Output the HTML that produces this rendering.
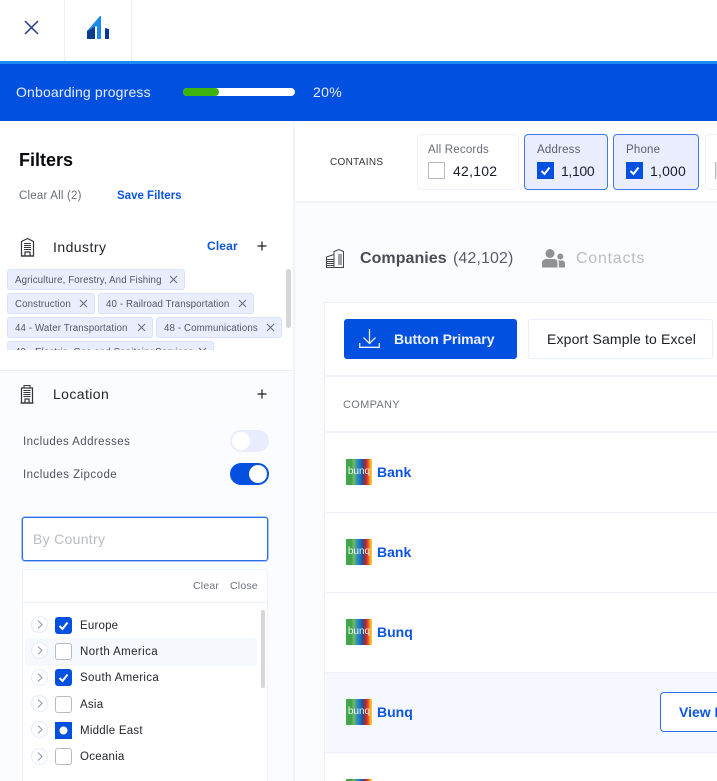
<!DOCTYPE html>
<html lang="en">
<head>
<meta charset="utf-8">
<title>Onboarding</title>
<style>
*{box-sizing:border-box}
html,body{margin:0;padding:0}
body{width:717px;height:781px;overflow:hidden;background:#fff;position:relative;font-family:"Liberation Sans",sans-serif;color:#1b1d24}
.a{position:absolute}
.t{position:absolute;white-space:nowrap;line-height:1}
.chip{position:absolute;height:21px;background:#e9edfd;border:1px solid #d9e2fc;border-radius:3px;font-size:9.7px;color:#525667;line-height:19px;padding-top:1px;padding-left:7px;white-space:nowrap;letter-spacing:.12px}
.chip svg{position:absolute;top:5px;right:6px}
.cb{position:absolute;width:17px;height:17px;border-radius:3px;background:#fff;border:1px solid #b9bbc1}
.cb.on{background:#0250e0;border-color:#0250e0}
.cb svg{position:absolute;left:2px;top:2px}
.exp{position:absolute;left:31px;width:17px;height:17px;border-radius:50%;background:#fff;border:1px solid #e8ebfb}
.exp svg{position:absolute;left:3px;top:3px}
.stat{position:absolute;top:134px;height:56px;border-radius:4px}
.row{position:absolute;left:325px;width:392px;height:80px;border-bottom:1px solid #eef1fd;background:#fff;overflow:hidden}
.logo{position:absolute;left:21px;top:26px;width:26px;height:26px;background:linear-gradient(90deg,#46a84a 0,#3f9f4c 20%,#74bb58 30%,#2f8fc4 42%,#1f6fb5 55%,#25508f 65%,#b5282e 75%,#e2462a 84%,#f7a823 93%,#fbd24a 100%);color:#eef6ef;font-size:10px;line-height:25px;text-align:center}
.name{position:absolute;left:52px;top:31px;font-size:14px;line-height:16px;font-weight:bold;color:#0c55e2;white-space:nowrap}
</style>
</head>
<body>

<!-- top bar -->
<div class="a" style="left:64px;top:0;width:1px;height:61px;background:#eef1fd"></div>
<div class="a" style="left:131px;top:0;width:1px;height:61px;background:#eef1fd"></div>
<svg class="a" style="left:24px;top:20px" width="15" height="15" viewBox="0 0 15 15"><path d="M1 1L14 14M14 1L1 14" stroke="#233a8c" stroke-width="1.5" fill="none"/></svg>
<svg class="a" style="left:87px;top:16px" width="22" height="23" viewBox="0 0 22 23">
<path d="M0 23V15L8 10.5V23Z" fill="#0b3a8e"/>
<path d="M0 15L13 0H14V23H10V10.5H8Z" fill="#1b8ae8"/>
<path d="M18 12L22 13V23H18Z" fill="#0b3a8e"/>
</svg>

<!-- progress -->
<div class="a" style="left:0;top:61px;width:717px;height:3px;background:#1a8cf2"></div>
<div class="a" style="left:0;top:64px;width:717px;height:57px;background:#0250e0"></div>
<div class="t" style="left:16px;top:85px;font-size:14px;color:#e9efff;letter-spacing:.17px">Onboarding progress</div>
<div class="a" style="left:183px;top:88px;width:112px;height:8px;border-radius:4px;background:#fff"></div>
<div class="a" style="left:183px;top:88px;width:36px;height:8px;border-radius:4px;background:#3cb30f"></div>
<div class="t" style="left:313px;top:85px;font-size:14px;color:#e9efff;letter-spacing:.35px">20%</div>

<!-- right panel background -->
<div class="a" style="left:295px;top:203px;width:422px;height:578px;background:#fbfcff"></div>
<div class="a" style="left:295px;top:201px;width:422px;height:2px;background:#f0f2fc"></div>

<!-- sidebar -->
<div class="a" style="left:293px;top:121px;width:2px;height:660px;background:#f0f2fc"></div>
<div class="a" style="left:0;top:370px;width:293px;height:411px;background:#fbfcff"></div>
<div class="a" style="left:0;top:370px;width:293px;height:1px;background:#eceef6"></div>

<div class="t" style="left:19px;top:151px;font-size:18px;font-weight:bold;color:#08090c">Filters</div>
<div class="t" style="left:19px;top:191px;font-size:11.5px;color:#6a6d78;letter-spacing:.2px">Clear All (2)</div>
<div class="t" style="left:117px;top:191px;font-size:11.5px;font-weight:bold;color:#0c55e2">Save Filters</div>

<svg class="a" style="left:20px;top:237px" width="15" height="20" viewBox="0 0 15 20" fill="none" stroke="#33353c">
<path d="M1.5 19V4.5L7.5 1.5L13.5 4.5V19Z" stroke-width="1.2"/>
<path d="M4 6.5H11M4 8.5H11M4 10.5H11M4 12.5H11" stroke-width="1.1"/>
<path d="M5 19V15H10V19M1 19H14" stroke-width="1.2"/>
</svg>
<div class="t" style="left:53px;top:240px;font-size:14px;color:#24262d;letter-spacing:.45px">Industry</div>
<div class="t" style="left:207px;top:240px;font-size:12px;font-weight:bold;color:#0c55e2;letter-spacing:.15px">Clear</div>
<svg class="a" style="left:257px;top:241px" width="10" height="10" viewBox="0 0 10 10"><path d="M5 .5V9.5M.5 5H9.5" stroke="#1b1d24" stroke-width="1.2"/></svg>

<div class="a" style="left:0;top:262px;width:285px;height:88px;overflow:hidden">
<div class="chip" style="left:7px;top:7px;width:178px">Agriculture, Forestry, And Fishing<svg width="9" height="9" viewBox="0 0 9 9"><path d="M1 1L8 8M8 1L1 8" stroke="#6a6e80" stroke-width="1.1"/></svg></div>
<div class="chip" style="left:7px;top:31px;width:88px">Construction<svg width="9" height="9" viewBox="0 0 9 9"><path d="M1 1L8 8M8 1L1 8" stroke="#6a6e80" stroke-width="1.1"/></svg></div>
<div class="chip" style="left:98px;top:31px;width:156px">40 - Railroad Transportation<svg width="9" height="9" viewBox="0 0 9 9"><path d="M1 1L8 8M8 1L1 8" stroke="#6a6e80" stroke-width="1.1"/></svg></div>
<div class="chip" style="left:7px;top:55px;width:146px">44 - Water Transportation<svg width="9" height="9" viewBox="0 0 9 9"><path d="M1 1L8 8M8 1L1 8" stroke="#6a6e80" stroke-width="1.1"/></svg></div>
<div class="chip" style="left:156px;top:55px;width:126px">48 - Communications<svg width="9" height="9" viewBox="0 0 9 9"><path d="M1 1L8 8M8 1L1 8" stroke="#6a6e80" stroke-width="1.1"/></svg></div>
<div class="chip" style="left:7px;top:79px;width:207px">49 - Electric, Gas and Sanitairy Services<svg width="9" height="9" viewBox="0 0 9 9"><path d="M1 1L8 8M8 1L1 8" stroke="#6a6e80" stroke-width="1.1"/></svg></div>
</div>
<div class="a" style="left:286px;top:269px;width:5px;height:59px;border-radius:3px;background:#d6d6d8"></div>

<svg class="a" style="left:20px;top:384px" width="14" height="20" viewBox="0 0 14 20" fill="none" stroke="#33353c">
<path d="M1.5 19V4H12.5V19Z" stroke-width="1.2"/>
<path d="M4 3.5V1.5H10V3.5" stroke-width="1"/>
<path d="M3.5 6.5H10.5M3.5 8.5H10.5M3.5 10.5H10.5M3.5 12.5H10.5" stroke-width="1.1"/>
<path d="M5 19V15H9V19M0.5 19H13.5" stroke-width="1.2"/>
</svg>
<div class="t" style="left:53px;top:387px;font-size:14px;color:#24262d;letter-spacing:.4px">Location</div>
<svg class="a" style="left:257px;top:389px" width="10" height="10" viewBox="0 0 10 10"><path d="M5 .5V9.5M.5 5H9.5" stroke="#1b1d24" stroke-width="1.2"/></svg>

<div class="t" style="left:23px;top:437px;font-size:11.5px;color:#50535f;letter-spacing:.42px">Includes Addresses</div>
<div class="a" style="left:230px;top:430px;width:39px;height:22px;border-radius:11px;background:#e9ecfc"></div>
<div class="a" style="left:232px;top:432px;width:18px;height:18px;border-radius:50%;background:#fff"></div>
<div class="t" style="left:23px;top:470px;font-size:11.5px;color:#50535f;letter-spacing:.45px">Includes Zipcode</div>
<div class="a" style="left:230px;top:463px;width:39px;height:22px;border-radius:11px;background:#0250e0"></div>
<div class="a" style="left:249px;top:465px;width:18px;height:18px;border-radius:50%;background:#fff"></div>

<div class="a" style="left:22px;top:517px;width:246px;height:44px;background:#fff;border:1px solid #2a6ee8;border-radius:3px;box-shadow:0 0 0 1px #a9c4f6"></div>
<div class="t" style="left:33px;top:532px;font-size:14px;color:#b9bbc0;letter-spacing:.3px">By Country</div>

<div class="a" style="left:22px;top:569px;width:246px;height:212px;background:#fff;border:1px solid #eef1fd;border-bottom:0;border-radius:3px 3px 0 0"></div>
<div class="a" style="left:23px;top:602px;width:244px;height:1px;background:#e9edfd"></div>
<div class="t" style="left:193px;top:581px;font-size:10.5px;color:#6f727c;letter-spacing:.2px">Clear</div>
<div class="t" style="left:230px;top:581px;font-size:10.5px;color:#6f727c;letter-spacing:.2px">Close</div>
<div class="a" style="left:25px;top:638px;width:232px;height:28px;border-radius:3px;background:#f5f8fc"></div>
<div class="a" style="left:261px;top:610px;width:4px;height:78px;border-radius:2px;background:#d6d6d8"></div>

<div class="exp" style="top:616px"><svg width="9" height="9" viewBox="0 0 9 9"><path d="M3 .5L7 4.5L3 8.5" stroke="#8e92b8" fill="none"/></svg></div>
<div class="exp" style="top:642px"><svg width="9" height="9" viewBox="0 0 9 9"><path d="M3 .5L7 4.5L3 8.5" stroke="#8e92b8" fill="none"/></svg></div>
<div class="exp" style="top:669px"><svg width="9" height="9" viewBox="0 0 9 9"><path d="M3 .5L7 4.5L3 8.5" stroke="#8e92b8" fill="none"/></svg></div>
<div class="exp" style="top:695px"><svg width="9" height="9" viewBox="0 0 9 9"><path d="M3 .5L7 4.5L3 8.5" stroke="#8e92b8" fill="none"/></svg></div>
<div class="exp" style="top:721px"><svg width="9" height="9" viewBox="0 0 9 9"><path d="M3 .5L7 4.5L3 8.5" stroke="#8e92b8" fill="none"/></svg></div>
<div class="exp" style="top:748px"><svg width="9" height="9" viewBox="0 0 9 9"><path d="M3 .5L7 4.5L3 8.5" stroke="#8e92b8" fill="none"/></svg></div>

<div class="cb on" style="left:55px;top:617px"><svg width="11" height="11" viewBox="0 0 11 11"><path d="M1.5 6L4.5 9L9.5 2.5" stroke="#fff" stroke-width="2" fill="none"/></svg></div>
<div class="cb" style="left:55px;top:643px"></div>
<div class="cb on" style="left:55px;top:669px"><svg width="11" height="11" viewBox="0 0 11 11"><path d="M1.5 6L4.5 9L9.5 2.5" stroke="#fff" stroke-width="2" fill="none"/></svg></div>
<div class="cb" style="left:55px;top:696px"></div>
<div class="cb on" style="left:55px;top:722px;border-radius:0"><svg width="11" height="11" viewBox="0 0 11 11"><circle cx="5.5" cy="5.5" r="4" fill="#fff"/></svg></div>
<div class="cb" style="left:55px;top:748px"></div>

<div class="t" style="left:80px;top:621px;font-size:11.5px;color:#24262d;letter-spacing:.2px">Europe</div>
<div class="t" style="left:80px;top:647px;font-size:11.5px;color:#24262d;letter-spacing:.4px">North America</div>
<div class="t" style="left:80px;top:673px;font-size:11.5px;color:#24262d;letter-spacing:.33px">South America</div>
<div class="t" style="left:80px;top:700px;font-size:11.5px;color:#24262d;letter-spacing:.25px">Asia</div>
<div class="t" style="left:80px;top:726px;font-size:11.5px;color:#24262d;letter-spacing:.25px">Middle East</div>
<div class="t" style="left:80px;top:752px;font-size:11.5px;color:#24262d;letter-spacing:.25px">Oceania</div>

<!-- contains bar -->
<div class="t" style="left:330px;top:158px;font-size:10px;color:#33353c;letter-spacing:.3px">CONTAINS</div>

<div class="stat" style="left:417px;width:102px;background:#fff;border:1px solid #eef1fd"></div>
<div class="t" style="left:428px;top:145px;font-size:11.5px;color:#6a6d78;letter-spacing:.2px">All Records</div>
<div class="cb" style="left:428px;top:162px;border-radius:0"></div>
<div class="t" style="left:453px;top:164px;font-size:14px;color:#1b1d2c;letter-spacing:.25px">42,102</div>

<div class="stat" style="left:524px;width:84px;background:#e9edfd;border:1px solid #3f7ced"></div>
<div class="t" style="left:537px;top:145px;font-size:11.5px;color:#5d606c;letter-spacing:.2px">Address</div>
<div class="cb on" style="left:537px;top:162px;border-radius:0"><svg width="11" height="11" viewBox="0 0 11 11"><path d="M1.5 6L4.5 9L9.5 2.5" stroke="#fff" stroke-width="2" fill="none"/></svg></div>
<div class="t" style="left:561px;top:164px;font-size:14px;color:#1b1d2c;letter-spacing:-.35px">1,100</div>

<div class="stat" style="left:613px;width:86px;background:#e9edfd;border:1px solid #3f7ced"></div>
<div class="t" style="left:626px;top:145px;font-size:11.5px;color:#5d606c;letter-spacing:.2px">Phone</div>
<div class="cb on" style="left:626px;top:162px;border-radius:0"><svg width="11" height="11" viewBox="0 0 11 11"><path d="M1.5 6L4.5 9L9.5 2.5" stroke="#fff" stroke-width="2" fill="none"/></svg></div>
<div class="t" style="left:650px;top:164px;font-size:14px;color:#1b1d2c;letter-spacing:.2px">1,000</div>

<div class="stat" style="left:705px;width:12px;background:#fff;border:1px solid #eef1fd;border-right:0;border-radius:4px 0 0 4px"></div>
<div class="a" style="left:715px;top:162px;width:2px;height:17px;background:#e6e6e8;border-left:1px solid #b9bbc1"></div>

<!-- tabs -->
<svg class="a" style="left:326px;top:249px" width="18" height="19" viewBox="0 0 18 19" fill="none" stroke="#44464f" stroke-width="1">
<path d="M.5 18.5V8L8 5.5V18.5Z"/><path d="M.5 10.5H8M.5 12.5H8M.5 14.5H8M.5 16.5H8"/>
<path d="M8 5.5V2.5L13 .5L17.5 2.5V18.5H8"/><path d="M13 5V16M15 5V16"/>
</svg>
<div class="t" style="left:360px;top:251px;font-size:16px;font-weight:bold;color:#4a4d58;letter-spacing:.05px">Companies</div>
<div class="t" style="left:453px;top:251px;font-size:16px;color:#5a5d68;letter-spacing:.1px">(42,102)</div>
<svg class="a" style="left:542px;top:249px" width="23" height="19" viewBox="0 0 23 19" fill="#909195">
<circle cx="8" cy="4.5" r="4.5"/><path d="M0 18.5V14C0 11.5 2 10 4 10H12C14 10 15.5 11.5 15.5 14V18.5Z"/>
<circle cx="18.3" cy="7.5" r="3"/><path d="M16.8 18.5V13.5C16.8 12.5 16.2 12 15.8 11.5H20C21.7 11.5 23 12.7 23 14.5V18.5Z"/>
</svg>
<div class="t" style="left:576px;top:251px;font-size:16px;color:#bcbdc3;letter-spacing:.75px">Contacts</div>

<!-- table card -->
<div class="a" style="left:324px;top:302px;width:393px;height:479px;background:#fff;border:1px solid #eef1fd;border-right:0;border-bottom:0"></div>
<div class="a" style="left:344px;top:319px;width:173px;height:40px;background:#0250e0;border-radius:3px"></div>
<svg class="a" style="left:359px;top:329px" width="21" height="20" viewBox="0 0 21 20" fill="none" stroke="#e9efff" stroke-width="1.3">
<path d="M10.5 0V14M4.5 8.5L10.5 14.5L16.5 8.5M.7 14V18.3H20.3V14"/>
</svg>
<div class="t" style="left:394px;top:332px;font-size:14px;font-weight:bold;color:#eaf0ff;letter-spacing:-.05px">Button Primary</div>
<div class="a" style="left:528px;top:319px;width:185px;height:40px;background:#fff;border:1px solid #e9edfd;border-radius:3px"></div>
<div class="t" style="left:547px;top:332px;font-size:14px;color:#1b1d24;letter-spacing:.16px">Export Sample to Excel</div>
<div class="a" style="left:325px;top:375px;width:392px;height:2px;background:#f0f2fc"></div>
<div class="t" style="left:343px;top:400px;font-size:11px;color:#73767f;letter-spacing:.3px">COMPANY</div>
<div class="a" style="left:325px;top:431px;width:392px;height:2px;background:#f0f2fc"></div>

<div class="row" style="top:433px"><div class="logo">bunq</div><div class="name">Bank</div></div>
<div class="row" style="top:513px"><div class="logo">bunq</div><div class="name">Bank</div></div>
<div class="row" style="top:593px"><div class="logo">bunq</div><div class="name">Bunq</div></div>
<div class="row" style="top:673px;background:#f5f8ff;border-bottom:1px solid #e9edfd"><div class="logo">bunq</div><div class="name">Bunq</div>
<div class="a" style="left:335px;top:19px;width:57px;height:40px;background:#fff;border:1px solid #2a6ee8;border-right:0;border-radius:4px 0 0 4px;overflow:hidden"><div class="name" style="left:18px;top:11px">View Pr</div></div></div>
<div class="row" style="top:753px;height:28px;border-bottom:0"><div class="logo">bunq</div></div>

</body>
</html>
